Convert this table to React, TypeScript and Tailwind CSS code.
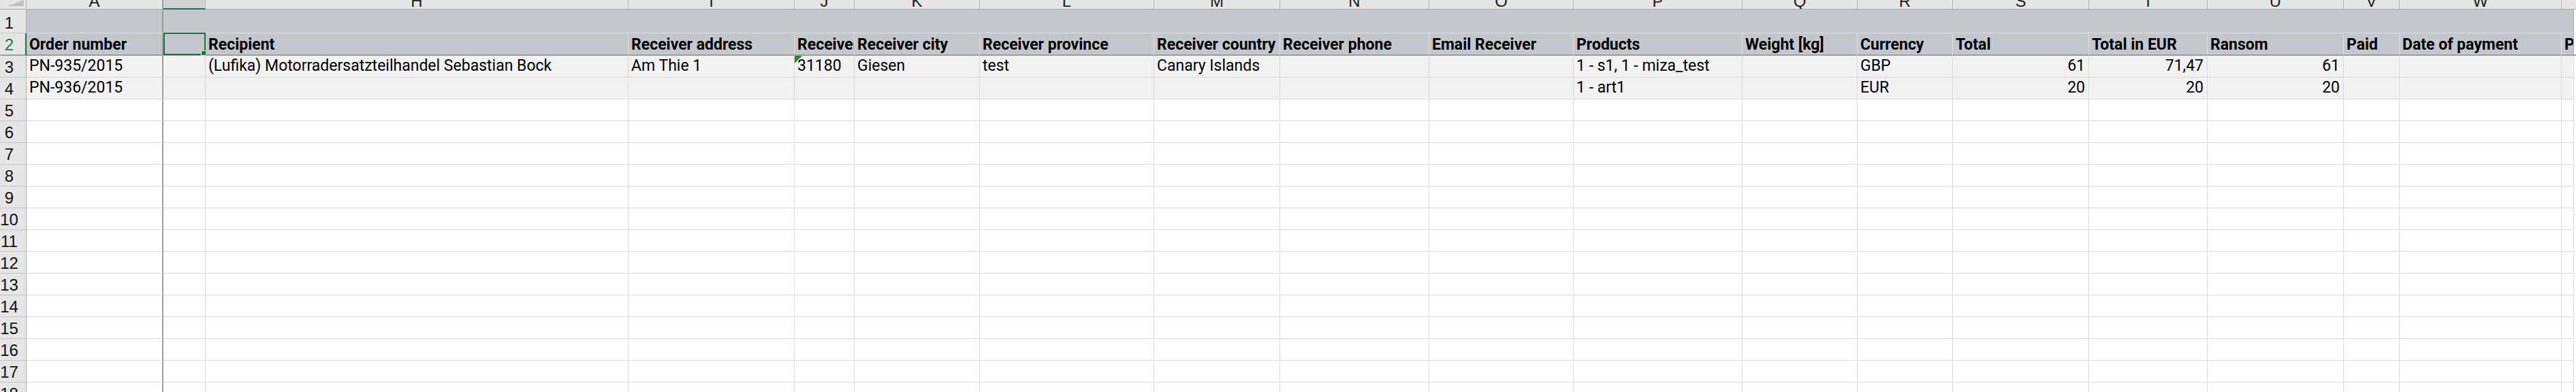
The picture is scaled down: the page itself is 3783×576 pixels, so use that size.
import React from 'react';

const LETTERS = ['A', '', 'H', 'I', 'J', 'K', 'L', 'M', 'N', 'O', 'P', 'Q', 'R', 'S', 'T', 'U', 'V', 'W', ''];

const HEADERS = [
  'Order number',
  '',
  'Recipient',
  'Receiver address',
  'Receiver postcode',
  'Receiver city',
  'Receiver province',
  'Receiver country',
  'Receiver phone',
  'Email Receiver',
  'Products',
  'Weight [kg]',
  'Currency',
  'Total',
  'Total in EUR',
  'Ransom',
  'Paid',
  'Date of payment',
  'Payment method',
];

type V = { t: string; r?: boolean; flag?: boolean };
const e: V = { t: '' };

const ROW3: V[] = [
  { t: 'PN-935/2015' },
  e,
  { t: '(Lufika) Motorradersatzteilhandel Sebastian Bock' },
  { t: 'Am Thie 1' },
  { t: '31180', flag: true },
  { t: 'Giesen' },
  { t: 'test' },
  { t: 'Canary Islands' },
  e,
  e,
  { t: '1 - s1, 1 - miza_test' },
  e,
  { t: 'GBP' },
  { t: '61', r: true },
  { t: '71,47', r: true },
  { t: '61', r: true },
  e,
  e,
  e,
];

const ROW4: V[] = [
  { t: 'PN-936/2015' },
  e,
  e,
  e,
  e,
  e,
  e,
  e,
  e,
  e,
  { t: '1 - art1' },
  e,
  { t: 'EUR' },
  { t: '20', r: true },
  { t: '20', r: true },
  { t: '20', r: true },
  e,
  e,
  e,
];

const ROBOTO = "font-['Roboto',sans-serif]";
const ARIAL = "font-['Liberation_Sans',Arial,sans-serif]";

function rightBorder(c: number, kind: 'hdr' | 'r1' | 'r2' | 'data') {
  if (c === 0) return 'border-r-2 border-r-[#9e9e9e]';
  if (kind === 'r1') return c === 18 ? 'border-r border-r-[#a9a9a9]' : '';
  if (kind === 'hdr') return c === 18 ? '' : 'border-r border-r-[#b4b4b4]';
  if (kind === 'r2') return c === 18 ? 'border-r border-r-[#a9a9a9]' : 'border-r border-r-[#dfe1e4]';
  return 'border-r border-r-[#dadada]';
}

function RowNum({ n, sel, extra }: { n: number; sel?: boolean; extra: string }) {
  return (
    <div
      className={`flex items-end bg-[#e6e6e6] ${ARIAL} text-[24px] leading-[24px] pb-[2px] overflow-hidden ${
        sel ? 'border-r-2 border-r-[#217346] text-[#217346]' : 'border-r border-r-[#ababab] text-[#111]'
      } ${extra}`}
    >
      <span className="w-[27px] text-center">{n}</span>
    </div>
  );
}

export default function App() {
  const cells: React.ReactNode[] = [];

  // Column header row
  cells.push(
    <div
      key="corner"
      className="relative bg-[#e6e6e6] border-r border-r-[#ababab] border-b border-b-[#ababab] overflow-hidden"
    >
      <svg className="absolute left-0 top-0" width="38" height="13" viewBox="0 0 38 13">
        <polygon points="35,0 35,9 11,9" fill="#c2c2c2" />
      </svg>
    </div>
  );
  LETTERS.forEach((l, c) => {
    const sel = c === 1;
    cells.push(
      <div
        key={`h${c}`}
        className={`overflow-hidden ${ARIAL} text-[24px] leading-[24px] text-center text-[#222] ${
          sel ? 'bg-[#d2d2d2] border-b-2 border-b-[#217346]' : 'bg-[#e6e6e6] border-b border-b-[#ababab]'
        } ${rightBorder(c, 'hdr')}`}
      >
        <div className="-mt-[10px]">{l}</div>
      </div>
    );
  });
  cells.push(<div key="hsp" className="bg-[#e6e6e6] border-b border-b-[#ababab]" />);

  // Row 1
  cells.push(<RowNum key="n1" n={1} extra="border-b border-b-[#c4c4c4]" />);
  LETTERS.forEach((_, c) => {
    cells.push(
      <div key={`r1${c}`} className={`bg-[#c4c7cb] border-b border-b-[#dcdee1] ${rightBorder(c, 'r1')}`} />
    );
  });
  cells.push(<div key="r1sp" className="bg-white" />);

  // Row 2 (column titles)
  cells.push(<RowNum key="n2" n={2} sel extra="border-b-2 border-b-[#9e9e9e]" />);
  HEADERS.forEach((h, c) => {
    const sel = c === 1;
    cells.push(
      <div
        key={`r2${c}`}
        className={`relative flex items-end bg-[#c4c7cb] border-b-2 border-b-[#9e9e9e] ${rightBorder(c, 'r2')}`}
      >
        <div
          className={`w-full overflow-hidden whitespace-nowrap px-[4px] pb-[1px] ${ROBOTO} font-bold text-[23px] leading-[27px] text-black`}
        >
          {h}
        </div>
        {sel && (
          <div className="absolute -top-[1px] left-0 -right-[1px] -bottom-[1px] border-2 border-[#217346]">
            <div className="absolute -right-[3px] -bottom-[3px] w-[8px] h-[8px] bg-[#217346] border border-white" />
          </div>
        )}
      </div>
    );
  });
  cells.push(<div key="r2sp" className="bg-white border-b-2 border-b-[#9e9e9e]" />);

  // Data rows 3 and 4
  [ROW3, ROW4].forEach((row, i) => {
    cells.push(<RowNum key={`n${3 + i}`} n={3 + i} extra="border-b border-b-[#c4c4c4]" />);
    row.forEach((v, c) => {
      cells.push(
        <div
          key={`d${i}${c}`}
          className={`relative flex items-end bg-[#f2f2f2] border-b border-b-[#dadada] ${rightBorder(c, 'data')}`}
        >
          <div
            className={`w-full overflow-hidden whitespace-nowrap pb-[3px] ${ROBOTO} text-[23px] leading-[27px] text-black ${
              v.r ? 'text-right pr-[5px] pl-[4px]' : 'px-[4px]'
            }`}
          >
            {v.t}
          </div>
          {v.flag && (
            <svg className="absolute left-0 top-0" width="11" height="11" viewBox="0 0 11 11">
              <polygon points="0,0 11,0 0,11" fill="#1e8b24" />
            </svg>
          )}
        </div>
      );
    });
    cells.push(<div key={`dsp${i}`} className="bg-white" />);
  });

  // Empty rows 5..18
  for (let n = 5; n <= 18; n++) {
    cells.push(<RowNum key={`n${n}`} n={n} extra="border-b border-b-[#c4c4c4]" />);
    LETTERS.forEach((_, c) => {
      cells.push(
        <div key={`e${n}${c}`} className={`bg-white border-b border-b-[#dadada] ${rightBorder(c, 'data')}`} />
      );
    });
    cells.push(<div key={`esp${n}`} className="bg-white" />);
  }

  return (
    <div className="w-[3783px] h-[576px] overflow-hidden bg-white">
      <div className="grid grid-cols-[39px_201px_62px_621px_244px_88px_184px_256px_185px_219px_212px_248px_169px_140px_200px_174px_200px_82px_238px_18px_3px] grid-rows-[14px_35px_33px_32px_32px_repeat(14,32px)]">
        {cells}
      </div>
    </div>
  );
}
